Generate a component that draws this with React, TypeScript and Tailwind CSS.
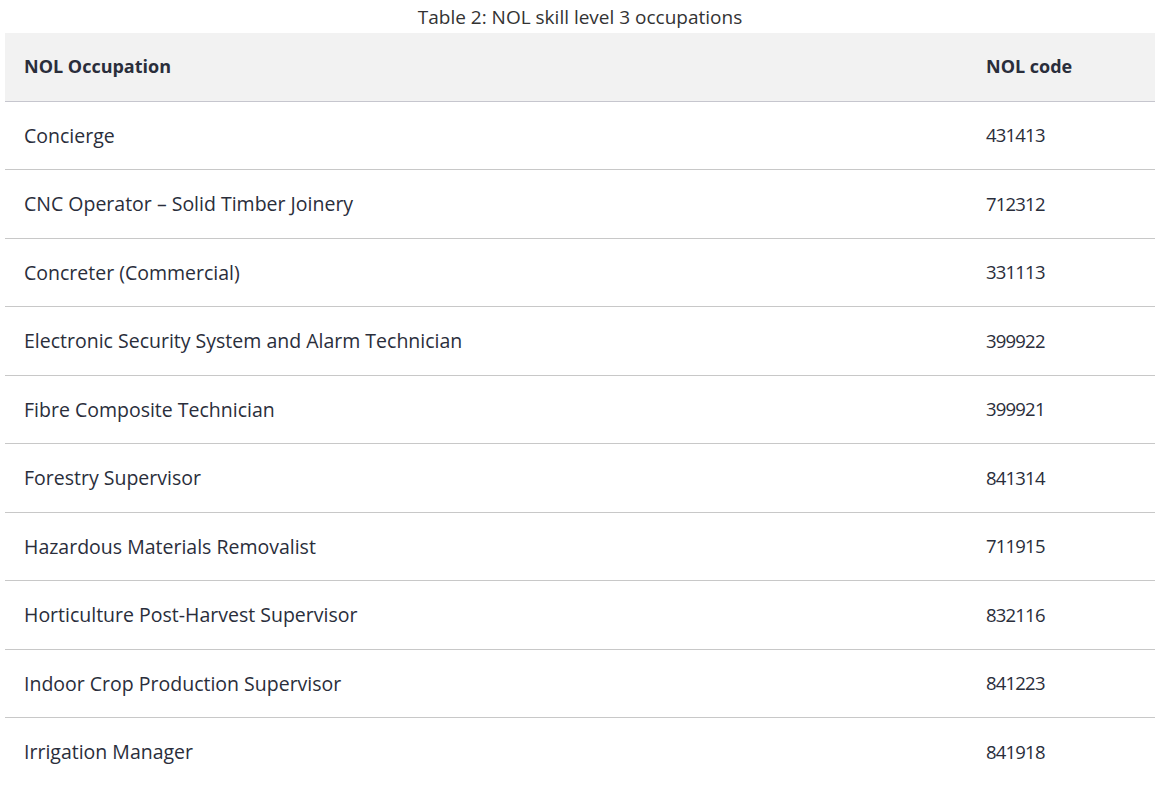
const rows: [string, string][] = [
  ["Concierge", "431413"],
  ["CNC Operator – Solid Timber Joinery", "712312"],
  ["Concreter (Commercial)", "331113"],
  ["Electronic Security System and Alarm Technician", "399922"],
  ["Fibre Composite Technician", "399921"],
  ["Forestry Supervisor", "841314"],
  ["Hazardous Materials Removalist", "711915"],
  ["Horticulture Post-Harvest Supervisor", "832116"],
  ["Indoor Crop Production Supervisor", "841223"],
  ["Irrigation Manager", "841918"],
];

export default function App() {
  return (
    <div className="min-h-screen bg-white px-[5px] font-['Open_Sans',sans-serif] text-[#2a2e3b]">
      <table className="w-full border-collapse text-left">
        <caption className="h-[33px] pt-[4px] text-center text-[19px] leading-[26px] text-[#333]">
          Table 2: NOL skill level 3 occupations
        </caption>
        <thead>
          <tr className="h-[68px] border-b border-[#c6c6ce] bg-[#f2f2f2]">
            <th className="pl-[19px] text-[18px] font-bold">NOL Occupation</th>
            <th className="w-[169px] text-[18px] font-bold">NOL code</th>
          </tr>
        </thead>
        <tbody>
          {rows.map(([name, code], i) => (
            <tr
              key={code}
              className={i < rows.length - 1 ? "h-[68.5px] border-b border-[#c8c8c8]" : "h-[68.5px]"}
            >
              <td className="pl-[19px] text-[19.5px]">{name}</td>
              <td className="text-[18.5px] tracking-[-0.8px]">{code}</td>
            </tr>
          ))}
        </tbody>
      </table>
    </div>
  );
}
